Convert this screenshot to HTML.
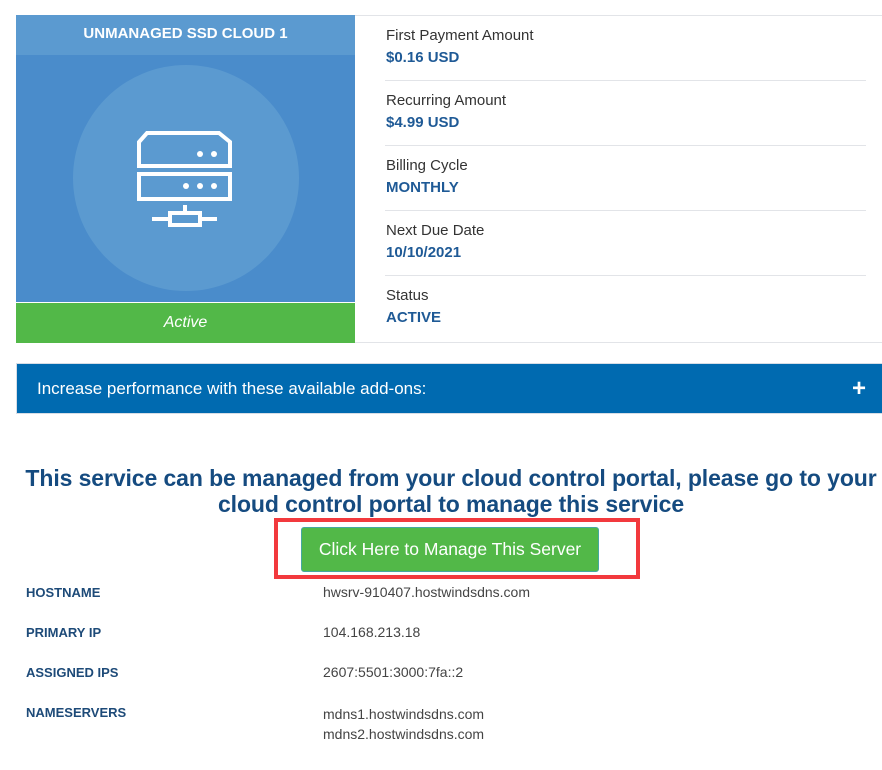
<!DOCTYPE html>
<html><head><meta charset="utf-8"><style>
*{margin:0;padding:0;box-sizing:border-box}
body{width:882px;height:770px;background:#fff;font-family:"Liberation Sans",sans-serif;position:relative;overflow:hidden}
.abs{position:absolute}
.lbl{position:absolute;left:386px;font-size:15px;color:#333}
.val{position:absolute;left:386px;font-size:15px;font-weight:bold;color:#1f5a96}
.sep{position:absolute;left:385px;width:481px;height:1px;background:#e2e4e8}
.tl{position:absolute;left:26px;font-size:13px;font-weight:bold;color:#1d4a78}
.tv{position:absolute;left:323px;font-size:14px;color:#444}
</style></head><body>
<div class="abs" style="left:16px;top:15px;width:339px;height:287px;background:#4a8ccb"></div>
<div class="abs" style="left:16px;top:15px;width:339px;height:40px;background:#5b9ad0;color:#fff;font-weight:bold;font-size:15px;text-align:center;line-height:38px">UNMANAGED SSD CLOUD 1</div>
<div class="abs" style="left:73px;top:65px;width:226px;height:226px;border-radius:50%;background:#5b9ad0"></div>
<svg class="abs" style="left:0;top:0" width="355" height="300">
<g fill="none" stroke="#fff" stroke-width="4">
<path d="M139 166 V142 L147 133 H219 L230 142 V166 Z"/>
<rect x="139" y="174" width="91" height="25"/>
<line x1="185" y1="205" x2="185" y2="213"/>
<rect x="170" y="213" width="30" height="12"/>
<line x1="152" y1="219" x2="170" y2="219"/>
<line x1="200" y1="219" x2="217" y2="219"/>
</g>
<g fill="#fff"><circle cx="200" cy="154" r="3"/><circle cx="214" cy="154" r="3"/>
<circle cx="186" cy="186" r="3"/><circle cx="200" cy="186" r="3"/><circle cx="214" cy="186" r="3"/></g>
</svg>
<div class="abs" style="left:16px;top:303px;width:339px;height:40px;background:#52b848;color:#fff;font-style:italic;font-size:16px;text-align:center;line-height:40px">Active</div>
<div class="abs" style="left:355px;top:15px;width:527px;height:1px;background:#e2e4e8"></div>
<div class="abs" style="left:355px;top:342px;width:527px;height:1px;background:#e2e4e8"></div>
<div class="lbl" style="top:27px">First Payment Amount</div><div class="val" style="top:49px">$0.16 USD</div>
<div class="sep" style="top:80px"></div>
<div class="lbl" style="top:92px">Recurring Amount</div><div class="val" style="top:114px">$4.99 USD</div>
<div class="sep" style="top:145px"></div>
<div class="lbl" style="top:157px">Billing Cycle</div><div class="val" style="top:179px">MONTHLY</div>
<div class="sep" style="top:210px"></div>
<div class="lbl" style="top:222px">Next Due Date</div><div class="val" style="top:244px">10/10/2021</div>
<div class="sep" style="top:275px"></div>
<div class="lbl" style="top:287px">Status</div><div class="val" style="top:309px">ACTIVE</div>
<div class="abs" style="left:16px;top:363px;width:866px;height:51px;background:#006ab0;border:1px solid #d6dde6;border-right:none;color:#fff;font-size:17px;line-height:49px;padding-left:20px">Increase performance with these available add-ons:<span style="position:absolute;right:16px;top:0;font-size:24px;font-weight:bold">+</span></div>
<div class="abs" style="left:0;top:465px;width:902px;text-align:center;font-size:23px;font-weight:bold;color:#154b80;line-height:26px;letter-spacing:-0.1px">This service can be managed from your cloud control portal, please go to your<br>cloud control portal to manage this service</div>
<div class="abs" style="left:274px;top:518px;width:366px;height:61px;border:4px solid #f2393d"></div>
<div class="abs" style="left:301px;top:527px;width:298px;height:45px;background:#52b848;border:1px solid #46a8a0;border-radius:3px;color:#fff;font-size:17.5px;text-align:center;line-height:43px">Click Here to Manage This Server</div>
<div class="tl" style="top:585px">HOSTNAME</div><div class="tv" style="top:584px">hwsrv-910407.hostwindsdns.com</div>
<div class="tl" style="top:625px">PRIMARY IP</div><div class="tv" style="top:624px">104.168.213.18</div>
<div class="tl" style="top:665px">ASSIGNED IPS</div><div class="tv" style="top:664px">2607:5501:3000:7fa::2</div>
<div class="tl" style="top:705px">NAMESERVERS</div><div class="tv" style="top:704px;line-height:20px">mdns1.hostwindsdns.com<br>mdns2.hostwindsdns.com</div>
</body></html>
